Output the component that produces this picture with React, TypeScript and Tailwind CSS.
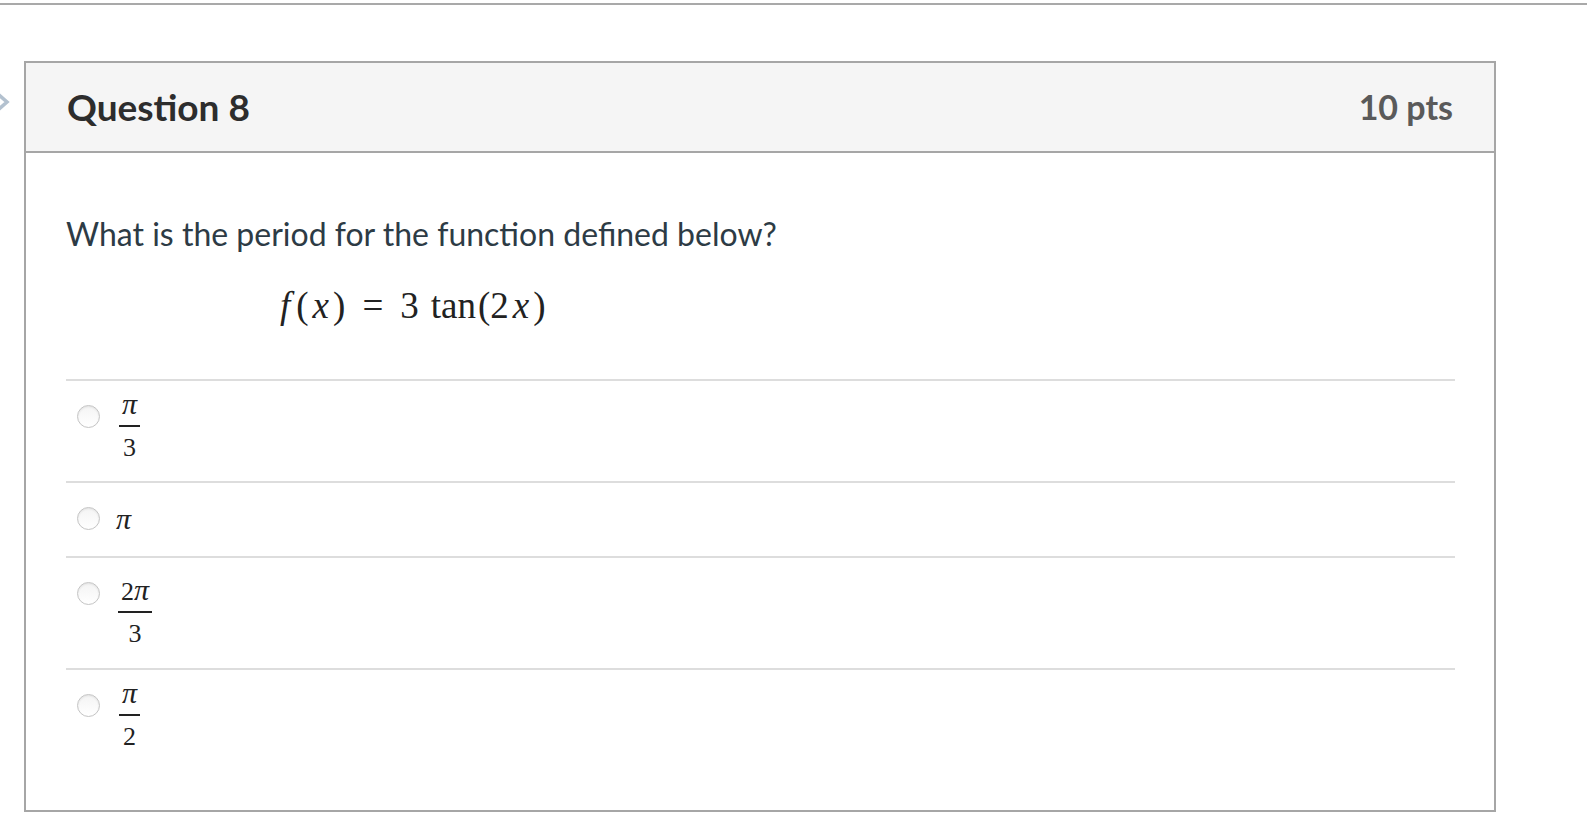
import React from "react";

const serif = "font-['Liberation_Serif','Times_New_Roman',serif] text-[#222]";

function Frac({ num, den }: { num: React.ReactNode; den: React.ReactNode }) {
  return (
    <div className={`inline-flex flex-col items-center text-[26px] ${serif}`}>
      <div className="h-[28px] leading-[28px] px-[3px] whitespace-nowrap">{num}</div>
      <div className="self-stretch h-[2px] bg-[#222] mt-[8px]" />
      <div className="h-[28px] leading-[28px] mt-[7px]">{den}</div>
    </div>
  );
}

function Radio() {
  return (
    <span className="block w-[23px] h-[23px] shrink-0 rounded-full border border-[#c4c4c4] bg-gradient-to-b from-[#f4f4f4] to-white shadow-[inset_0_1px_2px_rgba(0,0,0,0.08)]" />
  );
}

const pi = <i className="text-[30px] leading-none">π</i>;

export default function App() {
  return (
    <div className="w-[1590px] h-[835px] bg-white relative overflow-hidden font-['Lato','Noto_Sans',sans-serif]">
      <div className="mt-[3px] h-[2px] w-[1587px] bg-[#a9a9a9]" />

      <svg className="absolute left-0 top-[86px]" width="12" height="32" viewBox="0 0 12 32">
        <path d="M-8 3 L7 16 L-8 29" fill="none" stroke="#b3c1cf" strokeWidth="3.5" />
      </svg>

      <div className="ml-[24px] mt-[56px] w-[1472px] border-2 border-[#a6a6a6]">
        <div className="h-[88px] bg-[#f5f5f5] border-b-2 border-[#a6a6a6] box-content flex items-center justify-between px-[41px]">
          <span className="text-[37px] font-bold text-[#2d2d2d] leading-[1.2]">Question 8</span>
          <span className="text-[34px] font-bold text-[#5a5a5a] leading-[1.2]">10 pts</span>
        </div>

        <div className="px-[40px] pt-[61px] pb-[59px]">
          <p className="text-[32px] leading-[40px] text-[#2d3b45]">
            What is the period for the function defined below?
          </p>
          <p className={`mt-[30px] pl-[214px] text-[37px] leading-[44px] whitespace-nowrap ${serif}`}>
            <i className="mr-[6px]">f</i>(<i className="px-[4px]">x</i>)
            <span className="mx-[17px]">=</span>3
            <span className="ml-[12px] mr-[2px]">tan</span>(2<i className="px-[4px]">x</i>)
          </p>

          <div className="mt-[51px] w-[1389px]">
            <div className="border-t-2 border-[#dddddd] flex items-start pl-[11px] pb-[19px]">
              <div className="mt-[24px]"><Radio /></div>
              <div className="ml-[19px] mt-[8px]"><Frac num={pi} den="3" /></div>
            </div>
            <div className="border-t-2 border-[#dddddd] flex items-start pl-[11px] pb-[24px]">
              <div className="mt-[24px]"><Radio /></div>
              <div className={`ml-[16px] mt-[21px] h-[28px] text-[26px] leading-[28px] ${serif}`}>{pi}</div>
            </div>
            <div className="border-t-2 border-[#dddddd] flex items-start pl-[11px] pb-[20px]">
              <div className="mt-[24px]"><Radio /></div>
              <div className="ml-[18px] mt-[17px]"><Frac num={<>2{pi}</>} den="3" /></div>
            </div>
            <div className="border-t-2 border-[#dddddd] flex items-start pl-[11px]">
              <div className="mt-[24px]"><Radio /></div>
              <div className="ml-[19px] mt-[8px]"><Frac num={pi} den="2" /></div>
            </div>
          </div>
        </div>
      </div>
    </div>
  );
}
